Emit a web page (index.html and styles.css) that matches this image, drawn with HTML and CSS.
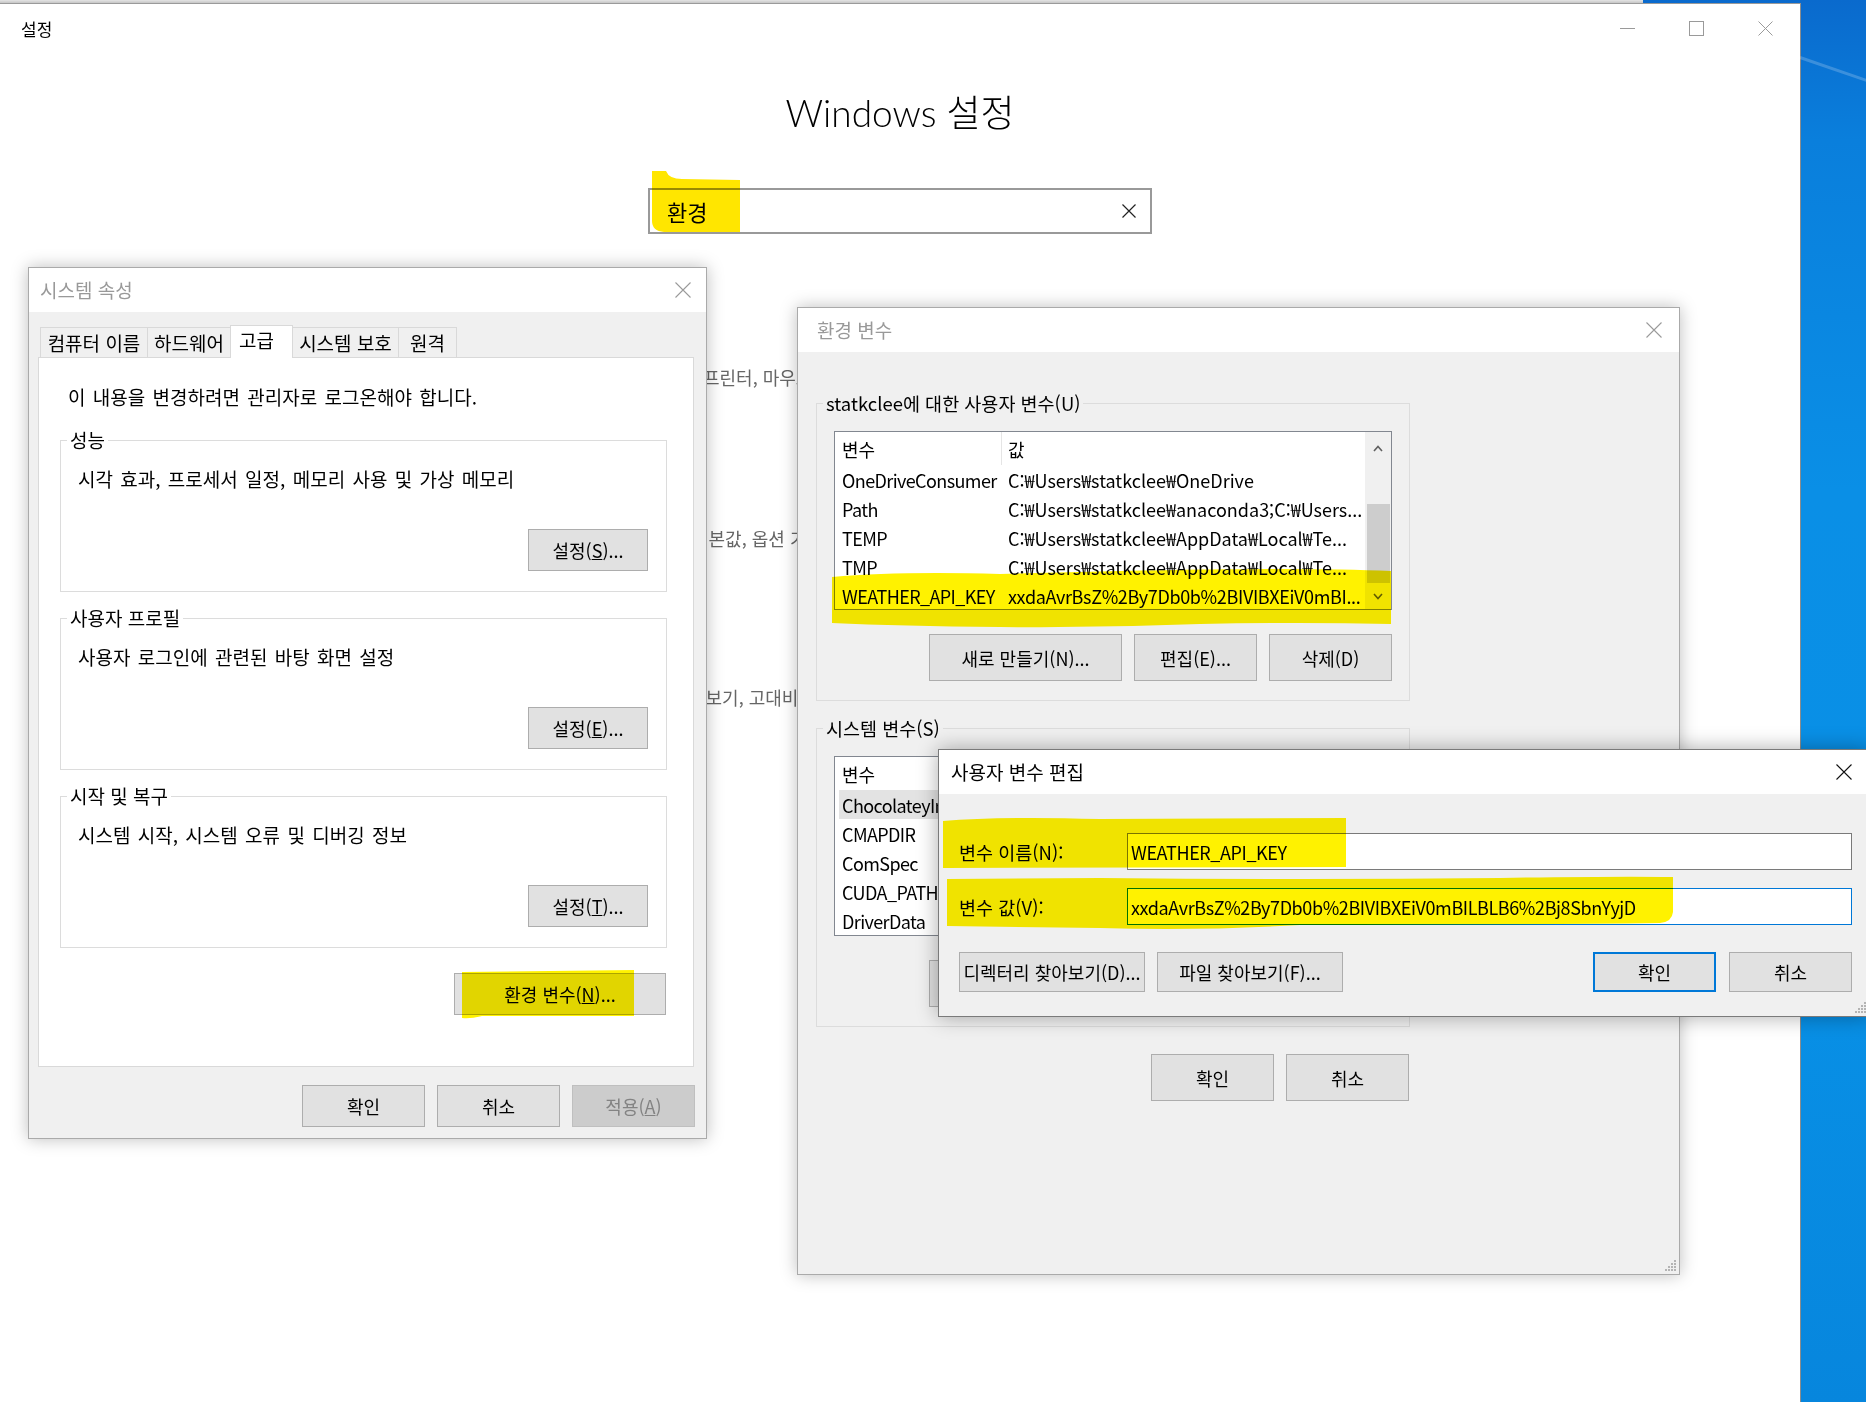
FILE: index.html
```html
<!DOCTYPE html>
<html lang="ko">
<head>
<meta charset="utf-8">
<title>설정</title>
<link rel="stylesheet" href="styles.css">
</head>
<body>
<div class="desktop">
  <div class="taskstrip"></div>

  <div class="settings">
    <div class="st-bar">
      <span class="st-title">설정</span>
      <div class="caps">
        <span class="cap"><svg width="15" height="15" viewBox="0 0 15 15"><path d="M0 7.5H15" stroke="#9a9a9a" stroke-width="1" fill="none"/></svg></span>
        <span class="cap"><svg width="15" height="15" viewBox="0 0 15 15"><rect x="0.5" y="0.5" width="14" height="14" stroke="#9a9a9a" stroke-width="1" fill="none"/></svg></span>
        <span class="cap"><svg width="15" height="15" viewBox="0 0 15 15"><path d="M0.5 0.5L14.5 14.5M14.5 0.5L0.5 14.5" stroke="#9a9a9a" stroke-width="1" fill="none"/></svg></span>
      </div>
    </div>
    <h1 class="st-heading">Windows 설정</h1>
    <div class="search">
      <span class="search-q">환경</span>
      <svg class="search-x" width="14" height="14" viewBox="0 0 14 14"><path d="M0.5 0.5L13.5 13.5M13.5 0.5L0.5 13.5" stroke="#222" stroke-width="1.2" fill="none"/></svg>
    </div>
    <div class="cats">
      <div class="cat cat1">프린터, 마우스</div>
      <div class="cat cat2">기본값, 옵션 기능</div>
      <div class="cat cat3">돋보기, 고대비</div>
    </div>
  </div>

  <section class="dlg sysprop">
    <header class="dlg-title">
      <span class="dlg-name inactive">시스템 속성</span>
      <svg class="xbtn" width="16" height="16" viewBox="0 0 16 16"><path d="M0.5 0.5L15.5 15.5M15.5 0.5L0.5 15.5" stroke="#9a9a9a" stroke-width="1.1" fill="none"/></svg>
    </header>
    <div class="sp-body">
      <div class="tabs">
        <span class="tab t1">컴퓨터 이름</span>
        <span class="tab t2">하드웨어</span>
        <span class="tab t3 sel">고급</span>
        <span class="tab t4">시스템 보호</span>
        <span class="tab t5">원격</span>
      </div>
      <div class="sp-panel">
        <p class="sp-note">이 내용을 변경하려면 관리자로 로그온해야 합니다.</p>
        <fieldset class="grp sp-grp">
          <legend>성능</legend>
          <p class="grp-desc">시각 효과, 프로세서 일정, 메모리 사용 및 가상 메모리</p>
          <div class="grp-actions"><button class="btn sp-set">설정(<u>S</u>)...</button></div>
        </fieldset>
        <fieldset class="grp sp-grp">
          <legend>사용자 프로필</legend>
          <p class="grp-desc">사용자 로그인에 관련된 바탕 화면 설정</p>
          <div class="grp-actions"><button class="btn sp-set">설정(<u>E</u>)...</button></div>
        </fieldset>
        <fieldset class="grp sp-grp">
          <legend>시작 및 복구</legend>
          <p class="grp-desc">시스템 시작, 시스템 오류 및 디버깅 정보</p>
          <div class="grp-actions"><button class="btn sp-set">설정(<u>T</u>)...</button></div>
        </fieldset>
        <div class="sp-env"><button class="btn env-btn">환경 변수(<u>N</u>)...</button></div>
      </div>
      <div class="sp-foot">
        <button class="btn w123 h42">확인</button>
        <button class="btn w123 h42">취소</button>
        <button class="btn w123 h42 disabled">적용(<u>A</u>)</button>
      </div>
    </div>
  </section>

  <section class="dlg envvar">
    <header class="dlg-title">
      <span class="dlg-name inactive">환경 변수</span>
      <svg class="xbtn" width="16" height="16" viewBox="0 0 16 16"><path d="M0.5 0.5L15.5 15.5M15.5 0.5L0.5 15.5" stroke="#9a9a9a" stroke-width="1.1" fill="none"/></svg>
    </header>
    <div class="ev-body">
      <fieldset class="grp ev-grp">
        <legend>statkclee에 대한 사용자 변수(U)</legend>
        <div class="list">
          <div class="lv">
            <div class="lv-head"><span class="c1">변수</span><span class="c2">값</span></div>
            <div class="lv-row"><span class="c1">OneDriveConsumer</span><span class="c2">C:₩Users₩statkclee₩OneDrive</span></div>
            <div class="lv-row"><span class="c1">Path</span><span class="c2">C:₩Users₩statkclee₩anaconda3;C:₩Users...</span></div>
            <div class="lv-row"><span class="c1">TEMP</span><span class="c2">C:₩Users₩statkclee₩AppData₩Local₩Te...</span></div>
            <div class="lv-row"><span class="c1">TMP</span><span class="c2">C:₩Users₩statkclee₩AppData₩Local₩Te...</span></div>
            <div class="lv-row"><span class="c1">WEATHER_API_KEY</span><span class="c2 tight">xxdaAvrBsZ%2By7Db0b%2BIVIBXEiV0mBI...</span></div>
          </div>
          <div class="sb">
            <div class="sb-btn sb-up"><svg width="10" height="7" viewBox="0 0 10 7"><path d="M1 6L5 1.5L9 6" stroke="#606060" stroke-width="1.6" fill="none"/></svg></div>
            <div class="sb-track"><div class="sb-thumb"></div></div>
            <div class="sb-btn sb-down"><svg width="10" height="7" viewBox="0 0 10 7"><path d="M1 1L5 5.5L9 1" stroke="#606060" stroke-width="1.6" fill="none"/></svg></div>
          </div>
        </div>
        <div class="ev-btns">
          <button class="btn w193 h47">새로 만들기(N)...</button>
          <button class="btn w123 h47">편집(E)...</button>
          <button class="btn w123 h47">삭제(D)</button>
        </div>
      </fieldset>
      <fieldset class="grp ev-grp">
        <legend>시스템 변수(S)</legend>
        <div class="list sys">
          <div class="lv">
            <div class="lv-head"><span class="c1">변수</span><span class="c2">값</span></div>
            <div class="lv-row sel"><span class="c1">ChocolateyInstall</span><span class="c2">C:₩ProgramData₩chocolatey</span></div>
            <div class="lv-row"><span class="c1">CMAPDIR</span><span class="c2">C:₩texlive₩2019₩texmf-dist₩fonts₩cmap</span></div>
            <div class="lv-row"><span class="c1">ComSpec</span><span class="c2">C:₩WINDOWS₩system32₩cmd.exe</span></div>
            <div class="lv-row"><span class="c1">CUDA_PATH</span><span class="c2">C:₩Program Files₩NVIDIA GPU Computing...</span></div>
            <div class="lv-row"><span class="c1">DriverData</span><span class="c2">C:₩Windows₩System32₩Drivers₩DriverData</span></div>
          </div>
        </div>
        <div class="ev-btns">
          <button class="btn w193 h47">새로 만들기(W)...</button>
          <button class="btn w123 h47">편집(I)...</button>
          <button class="btn w123 h47">삭제(L)</button>
        </div>
      </fieldset>
      <div class="ev-foot">
        <button class="btn w123 h47">확인</button>
        <button class="btn w123 h47">취소</button>
      </div>
    </div>
    <svg class="grip" width="12" height="12" viewBox="0 0 12 12"><path d="M9 0h2v2H9zM6 3h2v2H6zM9 3h2v2H9zM3 6h2v2H3zM6 6h2v2H6zM9 6h2v2H9zM0 9h2v2H0zM3 9h2v2H3zM6 9h2v2H6zM9 9h2v2H9z" fill="#b4b4b4"/></svg>
  </section>

  <section class="dlg editvar">
    <header class="dlg-title">
      <span class="dlg-name">사용자 변수 편집</span>
      <svg class="xbtn" width="16" height="16" viewBox="0 0 16 16"><path d="M0.5 0.5L15.5 15.5M15.5 0.5L0.5 15.5" stroke="#111" stroke-width="1.1" fill="none"/></svg>
    </header>
    <div class="ed-body">
      <div class="ed-row">
        <span class="ed-label">변수 이름(N):</span>
        <div class="ed-input">WEATHER_API_KEY</div>
      </div>
      <div class="ed-row">
        <span class="ed-label">변수 값(V):</span>
        <div class="ed-input focus">xxdaAvrBsZ%2By7Db0b%2BIVIBXEiV0mBILBLB6%2Bj8SbnYyjD</div>
      </div>
      <div class="ed-btns">
        <button class="btn w186 h40">디렉터리 찾아보기(D)...</button>
        <button class="btn w186 h40">파일 찾아보기(F)...</button>
        <button class="btn w123 h40 ed-ok">확인</button>
        <button class="btn w123 h40">취소</button>
      </div>
    </div>
    <svg class="grip" width="12" height="12" viewBox="0 0 12 12"><path d="M9 0h2v2H9zM6 3h2v2H6zM9 3h2v2H9zM3 6h2v2H3zM6 6h2v2H6zM9 6h2v2H9zM0 9h2v2H0zM3 9h2v2H3zM6 9h2v2H6zM9 9h2v2H9z" fill="#b4b4b4"/></svg>
  </section>

  <svg class="marks" width="1866" height="1402" viewBox="0 0 1866 1402">
    <path class="mk-search" d="M652 171L666 171Q669 179 682 179L740 180L740 232L664 232Q652 231 652 221Z"/>
    <path class="mk" d="M832 577Q900 571 1000 574L1120 571Q1300 567 1391 571L1391 624Q1300 622 1200 624Q1100 628 1000 627Q900 626 832 623Z"/>
    <path class="mk" d="M462 972L634 970L634 1016L482 1016Q470 1019 462 1018Z"/>
    <path class="mk" d="M943 821Q1000 816 1100 819L1346 818L1346 867L943 868Z"/>
    <path class="mk" d="M947 879L1100 878Q1300 880 1500 878Q1620 876 1673 877L1673 912Q1672 922 1660 923Q1500 925 1300 925Q1200 931 1100 928L947 926Z"/>
  </svg>
</div>
</body>
</html>
```

FILE: styles.css
```css
* { box-sizing: border-box; }
html, body { margin: 0; padding: 0; }
body {
  width: 1866px;
  height: 1402px;
  overflow: hidden;
  font-family: "Noto Sans CJK KR", "Noto Sans", sans-serif;
  font-size: 19px;
  color: #000;
  background: #0a84e0;
}

.desktop {
  position: relative;
  width: 1866px;
  height: 1402px;
  overflow: hidden;
  background: linear-gradient(180deg, #0a6acd 0%, #0a7fdc 10%, #0a8fe6 35%, #0890e6 70%, #0786dd 100%);
}
.desktop::after {
  content: "";
  position: absolute;
  left: 1800px;
  top: 56px;
  width: 90px;
  height: 3px;
  background: rgba(255, 255, 255, 0.2);
  transform: rotate(19deg);
  transform-origin: left center;
}
.taskstrip {
  position: absolute;
  left: 0;
  top: 0;
  width: 1643px;
  height: 3px;
  background: linear-gradient(#e4e4e4, #c6c6c6);
}

/* Settings window */
.settings {
  position: absolute;
  left: 0;
  top: 3px;
  width: 1801px;
  height: 1399px;
  background: #fff;
  border-top: 1px solid #9a9a9a;
  border-right: 1px solid #8c8c8c;
}
.st-bar {
  display: flex;
  align-items: center;
  height: 49px;
  padding-left: 21px;
}
.st-title { font-size: 17px; line-height: 22px; }
.caps { margin-left: auto; display: flex; }
.cap {
  width: 69px;
  height: 49px;
  display: flex;
  align-items: center;
  justify-content: center;
}
.st-heading {
  margin: 35px 0 0;
  text-align: center;
  font-family: "Lato", "Noto Sans CJK KR", sans-serif;
  font-weight: 300;
  font-size: 37px;
  line-height: 50px;
}
.search {
  width: 504px;
  height: 46px;
  margin: 50px auto 0;
  border: 2px solid #999;
  display: flex;
  align-items: center;
  padding: 0 14px 0 17px;
}
.search-q { font-size: 22px; line-height: 30px; }
.search-x { margin-left: auto; }
.cats {
  margin-top: 131px;
  color: #666;
  font-size: 18px;
  line-height: 24px;
}
.cat { white-space: nowrap; }
.cat1 { height: 161px; padding-left: 703px; }
.cat2 { height: 159px; padding-left: 692px; }
.cat3 { padding-left: 689px; }

/* Dialogs */
.dlg {
  position: absolute;
  display: flex;
  flex-direction: column;
  background: #f0f0f0;
  border: 1px solid #aaa;
  box-shadow: 0 0 16px rgba(0, 0, 0, 0.26);
}
.dlg-title {
  flex: none;
  height: 44px;
  background: #fff;
  display: flex;
  align-items: center;
  justify-content: space-between;
}
.dlg-name { line-height: 24px; }
.dlg-name.inactive { color: #999; }
.grip { position: absolute; right: 2px; bottom: 2px; }

.btn {
  font: inherit;
  font-size: 18px;
  line-height: 24px;
  color: #000;
  background: #e1e1e1;
  border: 1px solid #adadad;
  padding: 0;
  display: inline-flex;
  align-items: center;
  justify-content: center;
  white-space: nowrap;
  flex: none;
}
.btn.disabled { background: #cccccc; border-color: #bfbfbf; color: #838383; }
.w123 { width: 123px; }
.w186 { width: 186px; }
.w193 { width: 193px; }
.h40 { height: 40px; }
.h42 { height: 42px; }
.h47 { height: 47px; }

/* group boxes */
.grp {
  margin: 14px 0 0;
  padding: 0 18px 20px 17px;
  border: 1px solid #dcdcdc;
  min-width: 0;
}
.grp legend {
  padding: 0 3px;
  margin-left: -11px;
  line-height: 24px;
}
.grp-desc { margin: 15px 0 0; line-height: 24px; word-spacing: 2px; white-space: nowrap; }
.grp-actions { display: flex; justify-content: flex-end; margin-top: 38px; }

/* System properties */
.sysprop { left: 28px; top: 267px; width: 679px; height: 872px; z-index: 1; }
.sysprop .dlg-title { padding: 0 15px 0 11px; }
.sp-body { padding: 13px 12px 0 9px; }
.tabs {
  display: flex;
  align-items: flex-end;
  height: 32px;
  margin-left: 2px;
}
.tab {
  height: 30px;
  border: 1px solid #d9d9d9;
  border-bottom: 0;
  margin-right: -1px;
  display: flex;
  align-items: center;
  justify-content: center;
  line-height: 24px;
  background: #f0f0f0;
  white-space: nowrap;
}
.tab.sel {
  height: 33px;
  background: #fff;
  position: relative;
  z-index: 1;
  margin-bottom: -1px;
  padding: 0 10px 4px 0;
}
.t1 { width: 108px; }
.t2 { width: 84px; }
.t3 { width: 63px; }
.t4 { width: 107px; }
.t5 { width: 59px; }
.sp-panel {
  height: 710px;
  background: #fff;
  border: 1px solid #d9d9d9;
  padding: 27px 26px 0 21px;
}
.sp-note { margin: 0 0 0 8px; line-height: 24px; word-spacing: 2px; white-space: nowrap; }
.sp-note + .grp { margin-top: 19px; }
.sp-set { width: 120px; height: 42px; }
.sp-env { display: flex; justify-content: flex-end; margin-top: 25px; padding-right: 1px; }
.env-btn { width: 212px; height: 42px; }
.sp-foot {
  display: flex;
  justify-content: flex-end;
  gap: 12px;
  margin: 18px -1px 0 0;
}

/* Environment variables */
.envvar { left: 797px; top: 307px; width: 883px; height: 968px; z-index: 2; }
.envvar .dlg-title { padding: 0 17px 0 19px; }
.ev-body { padding: 39px 0 0 18px; width: 612px; }
.ev-grp { margin: 0; padding: 0 17px 19px 17px; }
.ev-grp legend { font-size: 18.5px; }
.ev-grp + .ev-grp { margin-top: 15px; }
.list {
  margin-top: 16px;
  height: 179px;
  border: 1px solid #828790;
  background: #fff;
  display: flex;
  overflow: hidden;
  font-size: 18px;
}
.list.sys { height: 180px; }
.lv { flex: 1; min-width: 0; }
.lv-head, .lv-row { display: flex; align-items: center; white-space: nowrap; }
.lv-head { height: 33px; }
.lv-row { height: 29px; }
.c1 { width: 166px; flex: none; padding-left: 7px; overflow: hidden; }
.lv-row .c1 { letter-spacing: -0.6px; }
.c2 { flex: 1; min-width: 0; padding-left: 7px; overflow: hidden; }
.c2.tight { letter-spacing: -0.35px; }
.lv-head .c2 {
  align-self: stretch;
  display: flex;
  align-items: center;
  border-left: 1px solid #e5e5e5;
  padding-left: 6px;
}
.lv-row.sel { background: #e3e3e3; margin-left: 4px; }
.lv-row.sel .c1 { width: 162px; padding-left: 3px; }
.sb {
  width: 26px;
  flex: none;
  background: #f0f0f0;
  display: flex;
  flex-direction: column;
}
.sb-btn { display: flex; align-items: center; justify-content: center; }
.sb-up { height: 32px; }
.sb-down { height: 26px; }
.sb-track { flex: 1; padding-top: 40px; }
.sb-thumb { height: 79px; margin: 0 1px 0 2px; background: #cdcdcd; }
.ev-btns { display: flex; justify-content: flex-end; gap: 12px; margin-top: 24px; }
.ev-foot { display: flex; justify-content: flex-end; gap: 12px; margin-top: 27px; padding-right: 1px; }

/* Edit user variable */
.editvar {
  left: 938px;
  top: 749px;
  width: 932px;
  height: 268px;
  z-index: 3;
  border-color: #7a7a7a;
  box-shadow: 0 0 20px rgba(0, 0, 0, 0.33);
}
.editvar .dlg-title { padding: 0 17px 0 12px; }
.ed-body { padding: 39px 17px 0 20px; }
.ed-row { display: flex; align-items: center; }
.ed-row + .ed-row { margin-top: 18px; }
.ed-label { width: 168px; flex: none; line-height: 24px; font-size: 18.5px; }
.ed-input {
  flex: 1;
  height: 37px;
  border: 1px solid #7a7a7a;
  background: #fff;
  padding-left: 3px;
  display: flex;
  align-items: center;
  white-space: nowrap;
  line-height: 24px;
  font-size: 18px;
  letter-spacing: -0.4px;
}
.ed-input.focus { border-color: #0078d7; }
.ed-btns { display: flex; gap: 12px; margin-top: 27px; }
.ed-ok { margin-left: auto; margin-right: 1px; border: 2px solid #0078d7; }

/* highlighter annotations */
.marks {
  position: absolute;
  left: 0;
  top: 0;
  z-index: 10;
  mix-blend-mode: multiply;
  pointer-events: none;
}
.mk-search { fill: #ffe600; }
.mk { fill: #fff200; }
```
